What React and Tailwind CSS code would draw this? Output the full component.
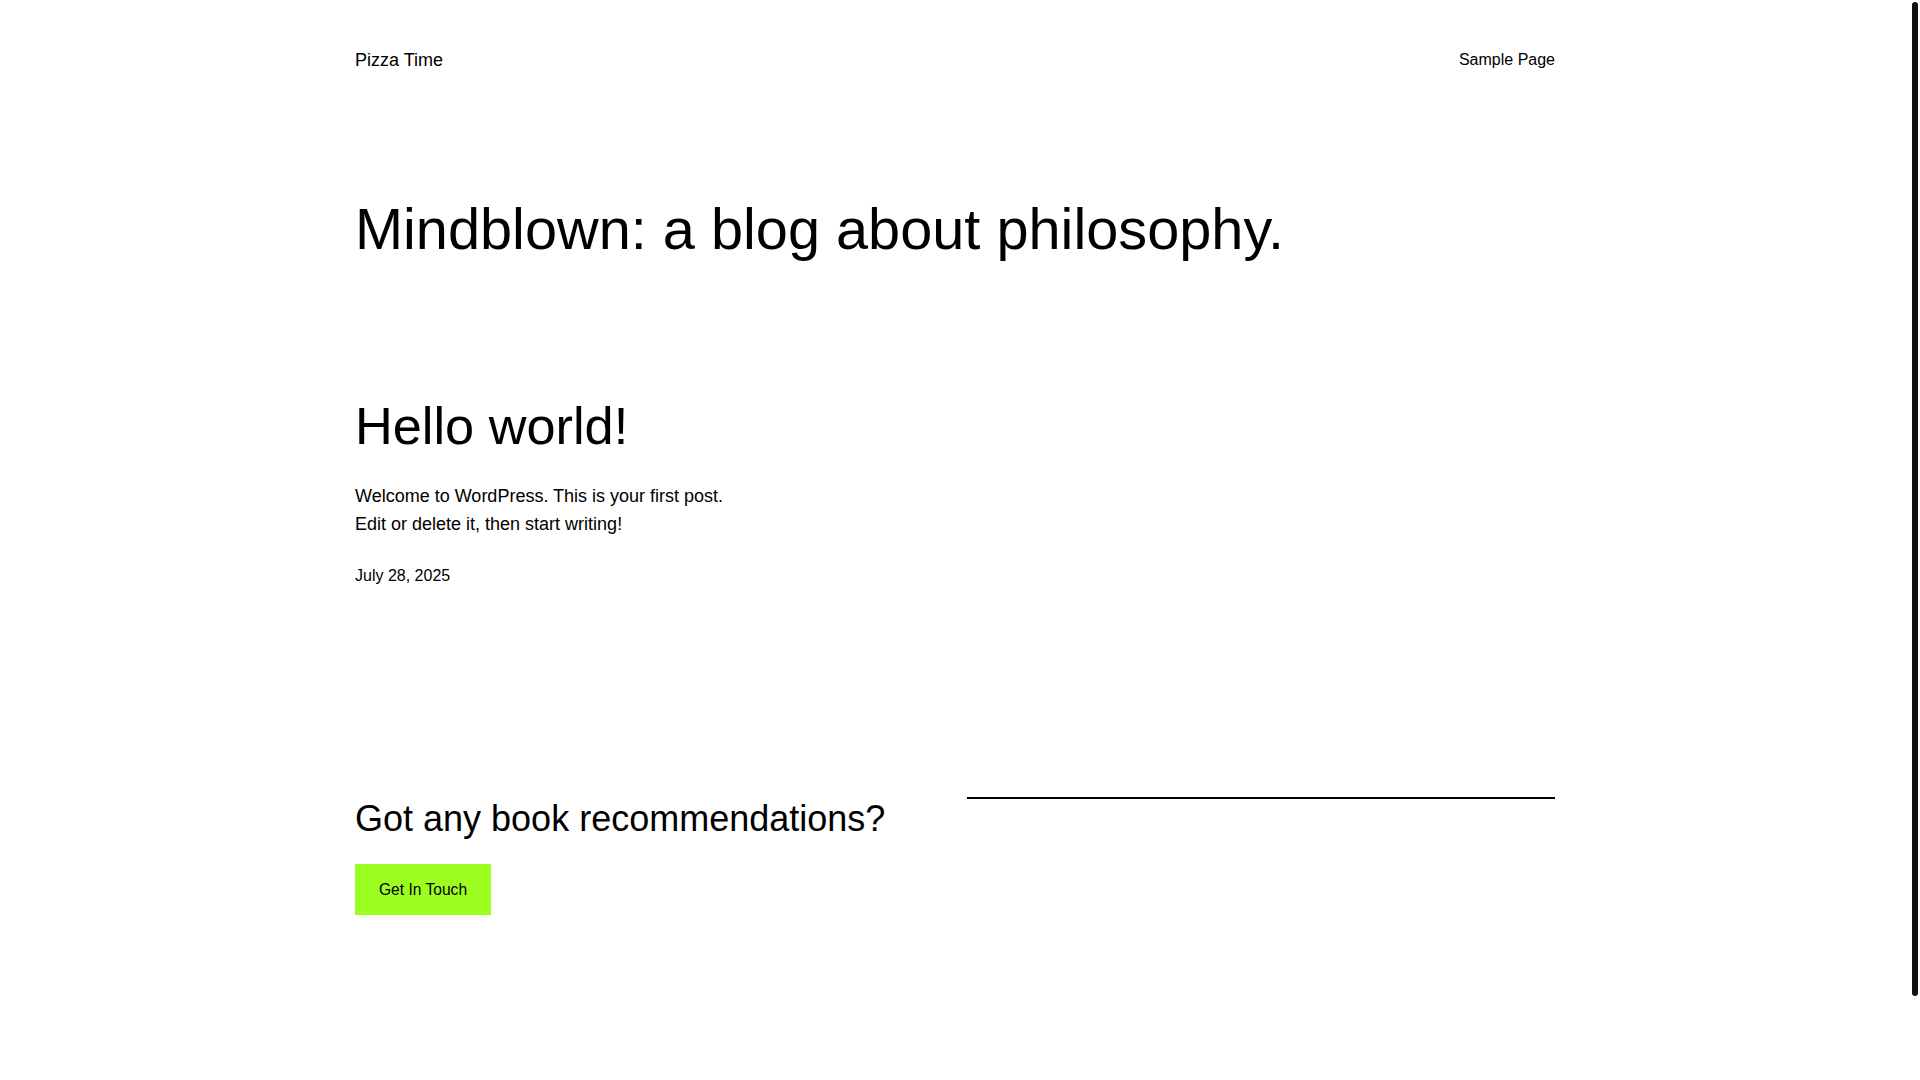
import React from 'react';

const font = { fontFamily: '"Liberation Sans", Arial, Helvetica, sans-serif' };

const Header = () => (
  <header className="flex items-center justify-between pt-[46px]">
    <a href="#" className="text-[18px] leading-[28px] text-black">Pizza Time</a>
    <nav>
      <a href="#" className="text-[16px] leading-[26px] text-black">Sample Page</a>
    </nav>
  </header>
);

const Post = () => (
  <div className="grid grid-cols-3 gap-[24px] mt-[131px]">
    <article>
      <h2 className="text-[52.3px] leading-[62px] font-normal text-black">
        <a href="#">Hello world!</a>
      </h2>
      <p className="mt-[25px] text-[18px] leading-[28px] text-black">
        Welcome to WordPress. This is your first post. Edit or delete it, then start writing!
      </p>
      <div className="mt-[25px] text-[16px] leading-[26px] text-black">July 28, 2025</div>
    </article>
  </div>
);

const Footer = () => (
  <section className="grid grid-cols-2 gap-[24px] mt-[208px]">
    <div>
      <h2 className="text-[36px] leading-[43px] font-normal text-black">Got any book recommendations?</h2>
      <a
        href="#"
        className="mt-[24px] inline-flex items-center justify-center w-[136px] h-[51px] bg-[#9dff20] text-[15.6px] leading-[24px] text-black"
      >
        Get In Touch
      </a>
    </div>
    <div>
      <hr className="border-0 border-t-2 border-black" />
    </div>
  </section>
);

export default function App() {
  return (
    <div className="relative min-h-[1080px] bg-white overflow-hidden" style={font}>
      <div className="w-[1910px]">
        <div className="mx-auto w-[1200px]">
          <Header />
          <h1 className="mt-[121px] text-[57.7px] leading-[69px] font-normal text-black">
            Mindblown: a blog about philosophy.
          </h1>
          <Post />
          <Footer />
        </div>
      </div>
      {/* overlay scrollbar thumb */}
      <div className="fixed top-[2px] right-[2px] w-[6px] h-[994px] rounded-full bg-[#111]" />
    </div>
  );
}
